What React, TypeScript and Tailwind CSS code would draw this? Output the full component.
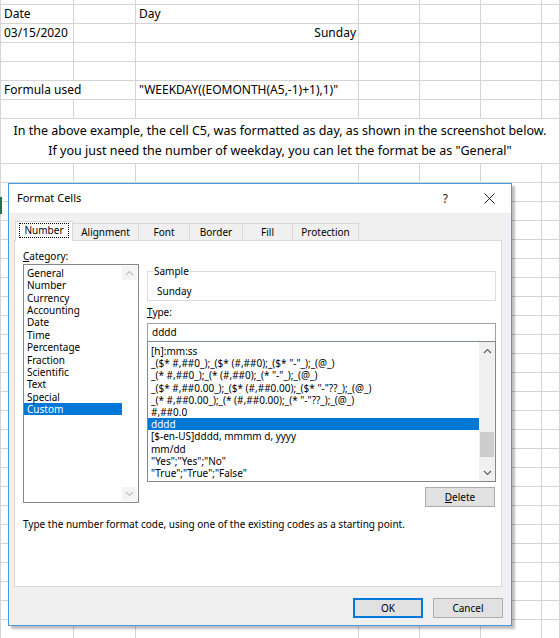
import React from 'react';

const sheetFont = "font-['Noto_Sans',sans-serif]";
const uiFont = "font-['Noto_Sans',sans-serif]";

type Cell = { text?: string; span?: string; align?: string };
type Row = { h: string; cells: Cell[] };

const empty = (n: number): Cell[] => Array.from({ length: n }, () => ({}));

const rows: Row[] = [
  { h: 'h-[5px]', cells: empty(7) },
  { h: 'h-[19px]', cells: [{ text: 'Date' }, {}, { text: 'Day' }, ...empty(4)] },
  { h: 'h-[19px]', cells: [{ text: '03/15/2020' }, {}, { text: 'Sunday', align: 'justify-end pr-[2px]' }, ...empty(4)] },
  { h: 'h-[19px]', cells: empty(7) },
  { h: 'h-[19px]', cells: empty(7) },
  {
    h: 'h-[19px]',
    cells: [{ text: 'Formula used', span: 'col-span-2' }, { text: '"WEEKDAY((EOMONTH(A5,-1)+1),1)"' }, ...empty(4)],
  },
  { h: 'h-[19px]', cells: empty(7) },
];

const tailRows = 25;

const categories = [
  'General',
  'Number',
  'Currency',
  'Accounting',
  'Date',
  'Time',
  'Percentage',
  'Fraction',
  'Scientific',
  'Text',
  'Special',
  'Custom',
];

const formats = [
  '[h]:mm:ss',
  '_($* #,##0_);_($* (#,##0);_($* "-"_);_(@_)',
  '_(* #,##0_);_(* (#,##0);_(* "-"_);_(@_)',
  '_($* #,##0.00_);_($* (#,##0.00);_($* "-"??_);_(@_)',
  '_(* #,##0.00_);_(* (#,##0.00);_(* "-"??_);_(@_)',
  '#,##0.0',
  'dddd',
  '[$-en-US]dddd, mmmm d, yyyy',
  'mm/dd',
  '"Yes";"Yes";"No"',
  '"True";"True";"False"',
];

const tabs = [
  { label: 'Alignment', w: 'w-[66px]' },
  { label: 'Font', w: 'w-[51px]' },
  { label: 'Border', w: 'w-[53px]' },
  { label: 'Fill', w: 'w-[50px]' },
  { label: 'Protection', w: 'w-[66px]' },
];

function Chevron({ down, color }: { down?: boolean; color: string }) {
  return (
    <svg width="9" height="6" viewBox="0 0 9 6" className={down ? 'rotate-180' : ''}>
      <path d="M1 5 L4.5 1.5 L8 5" fill="none" stroke={color} strokeWidth="1.2" />
    </svg>
  );
}

function Sheet() {
  return (
    <div className={`grid grid-cols-[73px_62px_223px_61px_61px_61px_1fr] border-l border-[#d4d4d4] text-[12px] text-black ${sheetFont}`}>
      {rows.map((row, r) =>
        row.cells.map((c, i) => (
          <div
            key={`${r}-${i}`}
            className={`${row.h} ${c.span ?? ''} flex items-center overflow-visible whitespace-nowrap border-b border-r border-[#d4d4d4] ${c.align ?? 'pl-[3px]'}`}
          >
            {c.text}
          </div>
        ))
      )}
      {/* merged note row */}
      <div className="col-span-7 flex h-[45px] flex-col items-center justify-center border-b border-r border-[#d4d4d4] text-[12.5px] leading-[20px]">
        <div>In the above example, the cell C5, was formatted as day, as shown in the screenshot below.</div>
        <div>If you just need the number of weekday, you can let the format be as "General"</div>
      </div>
      {Array.from({ length: tailRows }).map((_, r) =>
        Array.from({ length: 7 }).map((__, i) => (
          <div key={`t${r}-${i}`} className="h-[19px] border-b border-r border-[#d4d4d4]" />
        ))
      )}
    </div>
  );
}

function FormatCells() {
  return (
    <div
      className={`absolute left-[8px] top-[183px] flex h-[443px] w-[504px] flex-col border border-[#4a9ae0] bg-[#f0f0f0] text-[10px] text-black shadow-[3px_3px_2px_rgba(0,0,0,0.25)] ${uiFont}`}
    >
      {/* title bar */}
      <div className="flex h-[29px] items-center bg-white pl-[8px]">
        <span className="text-[11px]">Format Cells</span>
        <span className="ml-auto mr-[36px] text-[12px] text-[#222]">?</span>
        <svg width="11" height="11" viewBox="0 0 11 11" className="mr-[16px]">
          <path d="M0.5 0.5 L10.5 10.5 M10.5 0.5 L0.5 10.5" stroke="#222" strokeWidth="1" />
        </svg>
      </div>

      {/* tabs */}
      <div className="ml-[6px] flex h-[27px] items-end pt-[8px]">
        <div className="relative z-10 -mb-px flex h-[20px] w-[58px] items-start justify-center border-l border-r border-t border-[#d9d9d9] bg-white pt-[1px]">
          <span className="border border-dotted border-black px-[4px] leading-[13px]">Number</span>
        </div>
        {tabs.map((t) => (
          <div key={t.label} className={`${t.w} flex h-[17px] items-center justify-center border-r border-t border-[#d9d9d9]`}>
            {t.label}
          </div>
        ))}
      </div>

      {/* panel */}
      <div className="ml-[5px] h-[347px] w-[488px] border border-[#d9d9d9] bg-white pl-[8px] pt-[8px]">
        <div className="flex gap-[8px]">
          {/* category */}
          <div className="w-[116px]">
            <div className="h-[15px] leading-[14px]">
              <span className="underline">C</span>ategory:
            </div>
            <div className="flex h-[239px] border border-[#828790]">
              <div className="flex-1 pt-[2px]">
                {categories.map((c) => (
                  <div
                    key={c}
                    className={`h-[12.36px] pl-[3px] leading-[12.36px] ${c === 'Custom' ? 'bg-[#0078d7] text-white' : ''}`}
                  >
                    {c}
                  </div>
                ))}
              </div>
              <div className="flex w-[16px] flex-col justify-between py-[1px] pr-[1px]">
                <div className="flex h-[14px] items-center justify-center bg-[#f4f4f4]">
                  <Chevron color="#c2c2c2" />
                </div>
                <div className="flex h-[14px] items-center justify-center bg-[#f4f4f4]">
                  <Chevron down color="#c2c2c2" />
                </div>
              </div>
            </div>
          </div>

          {/* sample / type */}
          <div className="w-[349px]">
            <fieldset className="mt-[15px] h-[37px] border border-[#dcdcdc] px-[5px]">
              <legend className="px-[1px] leading-[14px]">Sample</legend>
              <div className="pl-[4px] pt-[6px] leading-[14px]">Sunday</div>
            </fieldset>
            <div className="mt-[4px] h-[18px] leading-[14px]">
              <span className="underline">T</span>ype:
            </div>
            <div className="flex h-[18px] items-center border-l border-r border-t border-[#a0a0a0] pl-[4px]">dddd</div>
            <div className="flex h-[141px] border border-[#828790]">
              <div className="min-w-0 flex-1 overflow-hidden pt-[3px]">
                {formats.map((f) => (
                  <div
                    key={f}
                    className={`h-[12.2px] overflow-hidden whitespace-nowrap pl-[3px] leading-[12.2px] ${f === 'dddd' ? 'bg-[#0078d7] text-white' : ''}`}
                  >
                    {f}
                  </div>
                ))}
              </div>
              <div className="flex w-[16px] flex-col bg-[#f0f0f0]">
                <div className="flex h-[17px] items-center justify-center">
                  <Chevron color="#606060" />
                </div>
                <div className="flex-1 pt-[73px]">
                  <div className="mx-[1px] h-[25px] bg-[#cdcdcd]" />
                </div>
                <div className="flex h-[17px] items-center justify-center">
                  <Chevron down color="#606060" />
                </div>
              </div>
            </div>
            <div className="mt-[5px] flex justify-end pr-[1px]">
              <button className="h-[20px] w-[70px] border border-[#adadad] bg-[#e1e1e1]">
                <span className="underline">D</span>elete
              </button>
            </div>
          </div>
        </div>
        <div className="mt-[10px] leading-[14px]">
          Type the number format code, using one of the existing codes as a starting point.
        </div>
      </div>

      {/* buttons */}
      <div className="mt-[11px] flex justify-end gap-[10px] pr-[8px]">
        <button className="h-[20px] w-[70px] border-2 border-[#0078d7] bg-[#e1e1e1]">OK</button>
        <button className="h-[20px] w-[70px] border border-[#adadad] bg-[#e1e1e1]">Cancel</button>
      </div>
    </div>
  );
}

export default function App() {
  return (
    <div className="relative h-[638px] w-[560px] overflow-hidden bg-white">
      <Sheet />
      <div className="absolute left-0 top-[197px] h-[17px] w-[2px] bg-[#217346]" />
      <FormatCells />
    </div>
  );
}
